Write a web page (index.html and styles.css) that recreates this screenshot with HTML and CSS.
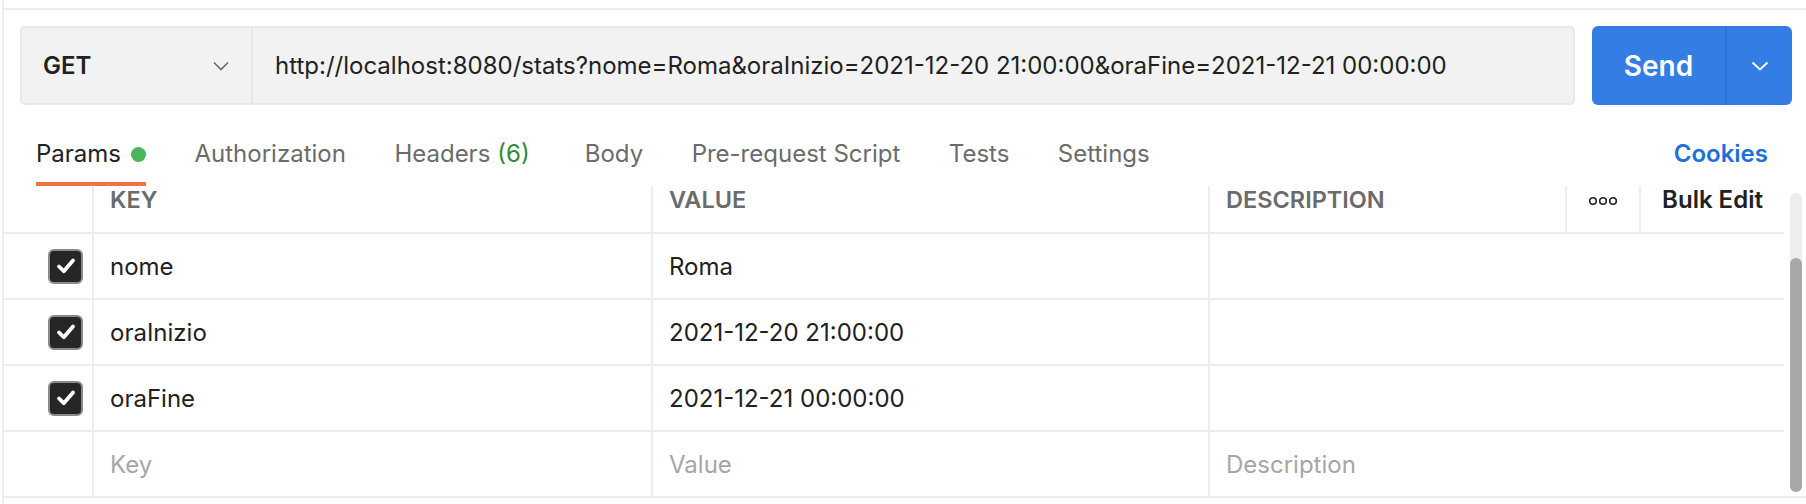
FILE: index.html
```html
<!DOCTYPE html>
<html lang="it">
<head>
<meta charset="utf-8">
<title>Postman request</title>
<link rel="stylesheet" href="styles.css">
</head>
<body>
<div class="app">
  <div class="topline"></div>

  <div class="request-bar">
    <div class="url-group">
      <div class="method">
        <span class="method-name">GET</span>
        <svg class="chev" width="16" height="10" viewBox="0 0 16 10"><path d="M1 1.5 L8 8.5 L15 1.5" fill="none" stroke="#6b6b6b" stroke-width="1.6"/></svg>
      </div>
      <div class="url">http://localhost:8080/stats?nome=Roma&amp;oraInizio=2021-12-20 21:00:00&amp;oraFine=2021-12-21 00:00:00</div>
    </div>
    <div class="send">
      <span class="send-label">Send</span>
      <span class="send-caret"><svg width="18" height="10" viewBox="0 0 18 10"><path d="M1.5 1.5 L9 8.5 L16.5 1.5" fill="none" stroke="#ffffff" stroke-width="2"/></svg></span>
    </div>
  </div>

  <div class="tabs">
    <div class="tab active">Params <span class="dot"></span></div>
    <div class="tab">Authorization</div>
    <div class="tab tab-wide">Headers <span class="count">(6)</span></div>
    <div class="tab">Body</div>
    <div class="tab">Pre-request Script</div>
    <div class="tab">Tests</div>
    <div class="tab">Settings</div>
    <div class="cookies">Cookies</div>
  </div>

  <div class="table-wrap">
    <div class="table">
      <div class="row head">
        <div class="c-check"></div>
        <div class="c-key"><span class="hd">KEY</span></div>
        <div class="c-val"><span class="hd">VALUE</span></div>
        <div class="c-desc"><span class="hd">DESCRIPTION</span></div>
        <div class="c-more">
          <svg width="30" height="10" viewBox="0 0 30 10"><circle cx="5" cy="5" r="3.3" fill="none" stroke="#212121" stroke-width="1.6"/><circle cx="15" cy="5" r="3.3" fill="none" stroke="#212121" stroke-width="1.6"/><circle cx="25" cy="5" r="3.3" fill="none" stroke="#212121" stroke-width="1.6"/></svg>
        </div>
        <div class="c-bulk">Bulk Edit</div>
      </div>
      <div class="row">
        <div class="c-check"><span class="cb"><svg width="26" height="26" viewBox="0 0 26 26"><path d="M6 13.5 L10.8 18.2 L20 7.5" fill="none" stroke="#fff" stroke-width="3.8" stroke-linecap="round" stroke-linejoin="round"/></svg></span></div>
        <div class="c-key">nome</div>
        <div class="c-val">Roma</div>
        <div class="c-desc wide"></div>
      </div>
      <div class="row">
        <div class="c-check"><span class="cb"><svg width="26" height="26" viewBox="0 0 26 26"><path d="M6 13.5 L10.8 18.2 L20 7.5" fill="none" stroke="#fff" stroke-width="3.8" stroke-linecap="round" stroke-linejoin="round"/></svg></span></div>
        <div class="c-key">oraInizio</div>
        <div class="c-val">2021-12-20 21:00:00</div>
        <div class="c-desc wide"></div>
      </div>
      <div class="row">
        <div class="c-check"><span class="cb"><svg width="26" height="26" viewBox="0 0 26 26"><path d="M6 13.5 L10.8 18.2 L20 7.5" fill="none" stroke="#fff" stroke-width="3.8" stroke-linecap="round" stroke-linejoin="round"/></svg></span></div>
        <div class="c-key">oraFine</div>
        <div class="c-val">2021-12-21 00:00:00</div>
        <div class="c-desc wide"></div>
      </div>
      <div class="row last">
        <div class="c-check"></div>
        <div class="c-key ph">Key</div>
        <div class="c-val ph">Value</div>
        <div class="c-desc wide ph">Description</div>
      </div>
    </div>
    <div class="scrollbar"><div class="thumb"></div></div>
  </div>
</div>
</body>
</html>
```

FILE: styles.css
```css
* { box-sizing: border-box; }

html, body {
  margin: 0;
  padding: 0;
  background: #ffffff;
}

body {
  font-family: Inter, "Noto Sans", sans-serif;
  color: #212121;
  width: 1806px;
  height: 504px;
  overflow: hidden;
}

.app {
  margin-left: 2px;
  border-left: 2px solid #ededed;
  height: 504px;
  display: flex;
  flex-direction: column;
}

.topline {
  height: 10px;
  border-bottom: 2px solid #ededed;
}

/* request bar */
.request-bar {
  display: flex;
  padding: 16px 14px 0 16px;
  height: 95px;
}

.url-group {
  flex: 1;
  display: flex;
  height: 79px;
  background: #f2f2f2;
  border: 2px solid #e8e8e8;
  border-radius: 5px;
}

.method {
  width: 231px;
  display: flex;
  align-items: center;
  justify-content: space-between;
  padding: 0 22px 0 21px;
  border-right: 2px solid #e6e6e6;
}

.method-name {
  font-size: 24px;
  font-weight: 600;
  color: #212121;
}

.url {
  display: flex;
  align-items: center;
  padding-left: 22px;
  font-size: 24px;
  color: #212121;
  white-space: nowrap;
}

.send {
  width: 200px;
  margin-left: 17px;
  height: 79px;
  background: #347de4;
  border-radius: 6px;
  display: flex;
  color: #ffffff;
}

.send-label {
  width: 135px;
  display: flex;
  align-items: center;
  justify-content: center;
  font-size: 28px;
  font-weight: 600;
  border-right: 2px solid #2f71d3;
}

.send-caret {
  flex: 1;
  display: flex;
  align-items: center;
  justify-content: center;
}

/* tabs */
.tabs {
  height: 81px;
  display: flex;
  align-items: flex-end;
  padding-left: 32px;
  padding-right: 38px;
}

.tab {
  display: flex;
  align-items: center;
  font-size: 24px;
  line-height: 28px;
  color: #6b6b6b;
  padding-bottom: 14px;
  border-bottom: 4px solid transparent;
  margin-right: 48.5px;
  white-space: nowrap;
}

.tab.tab-wide {
  margin-right: 55px;
}

.tab.active {
  color: #212121;
  border-bottom-color: #ee7442;
}

.dot {
  width: 15px;
  height: 15px;
  border-radius: 50%;
  background: #4cb45a;
  margin-left: 10px;
}

.count {
  color: #2f8a3c;
  margin-left: 7px;
}

.cookies {
  margin-left: auto;
  font-size: 24px;
  line-height: 28px;
  padding-bottom: 18px;
  font-weight: 600;
  color: #1e6fd9;
}

/* table */
.table-wrap {
  display: flex;
  border-bottom: 2px solid #ededed;
}

.table {
  width: 1780px;
}

.row {
  display: flex;
  height: 66px;
  border-bottom: 2px solid #ededed;
}

.row.last {
  height: 64px;
  border-bottom: none;
}

.row.head {
  height: 48px;
}

.row > div {
  display: flex;
  align-items: center;
  font-size: 24px;
  color: #212121;
  white-space: nowrap;
}

.row.head > div {
  align-items: flex-start;
  padding-top: 0;
  line-height: 28px;
}

.hd {
  font-size: 23.5px;
  font-weight: 600;
  color: #6b6b6b;
}

.c-check {
  width: 90px;
  justify-content: flex-end;
  padding-right: 9px;
  border-right: 2px solid #ededed;
}

.c-key {
  width: 559px;
  padding-left: 16px;
  border-right: 2px solid #ededed;
}

.c-val {
  width: 557px;
  padding-left: 16px;
  border-right: 2px solid #ededed;
}

.c-desc {
  width: 357px;
  padding-left: 16px;
  border-right: 2px solid #ededed;
}

.c-desc.wide {
  flex: 1;
  border-right: none;
}

.row.head .c-more {
  width: 74px;
  justify-content: center;
  border-right: 2px solid #ededed;
  height: 46px;
  padding-top: 10px;
}

.row.head .c-bulk {
  flex: 1;
  justify-content: center;
  font-size: 24px;
  font-weight: 600;
  color: #212121;
}

.ph {
  color: #a6a6a6 !important;
}

.cb {
  width: 35px;
  height: 35px;
  border-radius: 6px;
  background: #262626;
  border: 2px solid #8a8a8a;
  display: flex;
  align-items: center;
  justify-content: center;
}

.scrollbar {
  width: 12px;
  margin-left: 6px;
  margin-top: 7px;
  margin-bottom: 4px;
  border-radius: 6px;
  background: #ededed;
  display: flex;
  flex-direction: column;
  justify-content: flex-end;
}

.thumb {
  height: 234px;
  border-radius: 6px;
  background: #a8a8a8;
}
```
